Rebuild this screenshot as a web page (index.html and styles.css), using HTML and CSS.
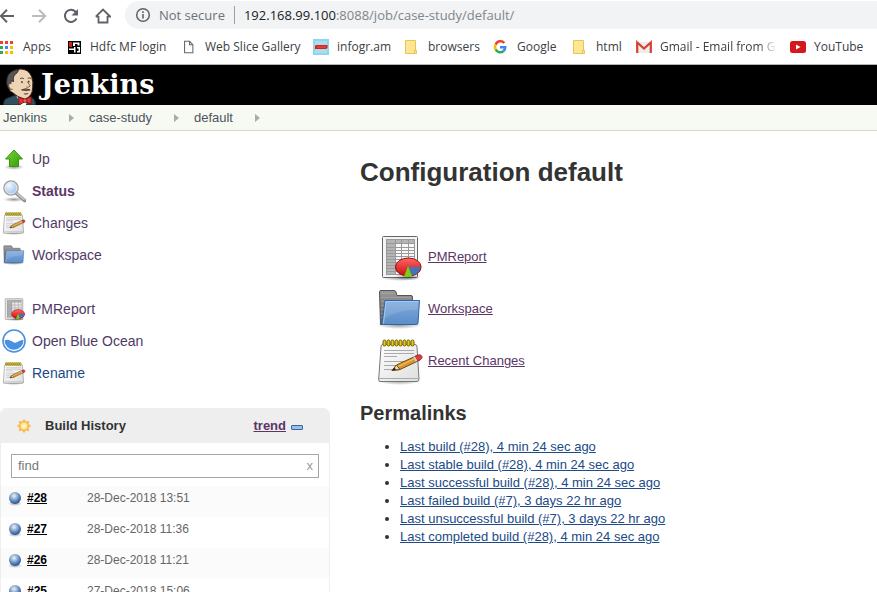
FILE: index.html
```html
<!DOCTYPE html>
<html lang="en">
<head>
<meta charset="utf-8">
<title>case-study default [Jenkins]</title>
<link rel="stylesheet" href="styles.css">
</head>
<body>
<svg class="defs" aria-hidden="true">
  <defs>
    <linearGradient id="g-green" x1="0" y1="0" x2="1" y2="1"><stop offset="0" stop-color="#7ad83a"/><stop offset="1" stop-color="#2f9a08"/></linearGradient>
    <linearGradient id="g-folder" x1="0" y1="0" x2="0" y2="1"><stop offset="0" stop-color="#82abdb"/><stop offset="1" stop-color="#5b8dc8"/></linearGradient>
    <linearGradient id="g-back" x1="0" y1="0" x2="0" y2="1"><stop offset="0" stop-color="#9a9a9a"/><stop offset="1" stop-color="#5c5c5c"/></linearGradient>
    <linearGradient id="g-paper" x1="0" y1="0" x2="1" y2="1"><stop offset="0" stop-color="#ffffff"/><stop offset="1" stop-color="#dedede"/></linearGradient>
    <linearGradient id="g-red" x1="0" y1="0" x2="0" y2="1"><stop offset="0" stop-color="#f66"/><stop offset="1" stop-color="#c90d0d"/></linearGradient>
    <radialGradient id="g-shadow"><stop offset="0" stop-color="#000" stop-opacity=".4"/><stop offset="1" stop-color="#000" stop-opacity="0"/></radialGradient>
    <radialGradient id="g-lens" cx=".35" cy=".3" r=".8"><stop offset="0" stop-color="#f4faff"/><stop offset="1" stop-color="#8fb9ea"/></radialGradient>
    <radialGradient id="g-ball" cx=".42" cy=".33" r=".65"><stop offset="0" stop-color="#edf4f8"/><stop offset=".35" stop-color="#a4bdd6"/><stop offset=".75" stop-color="#4f7ab3"/><stop offset="1" stop-color="#2c5a9c"/></radialGradient>
    <radialGradient id="g-sun"><stop offset="0" stop-color="#fffbd0"/><stop offset="1" stop-color="#fcdc62"/></radialGradient>
  </defs>
  <symbol id="i-up" viewBox="0 0 24 24">
    <ellipse cx="12" cy="20" rx="10" ry="3" fill="url(#g-shadow)"/>
    <path d="M12 3 20.500 12H16.500V19.500H7.500V12H3.500Z" fill="url(#g-green)" stroke="#3c9411"/>
  </symbol>
  <symbol id="i-search" viewBox="0 0 24 24">
    <ellipse cx="12" cy="20.500" rx="11" ry="2.500" fill="url(#g-shadow)"/>
    <path d="M14.500 14.500 22.500 21.500" stroke="#888" stroke-width="3.600" stroke-linecap="round"/>
    <path d="M15 14.500 22 20.500" stroke="#c4c4c4" stroke-width="2" stroke-linecap="round"/>
    <circle cx="9" cy="9" r="7" fill="url(#g-lens)" stroke="#a0a0a0" stroke-width="1.600"/>
    <circle cx="9" cy="9" r="6" fill="none" stroke="#e9eef2"/>
  </symbol>
  <symbol id="i-note" viewBox="0 0 48 48">
    <ellipse cx="23" cy="44" rx="22" ry="4" fill="url(#g-shadow)"/>
    <path d="M6.500 7.500H39Q41 7.500 41 10L43 42Q43 44.500 41 44.500H4Q2.500 44.500 2.700 42L5 10Q5 7.500 6.500 7.500Z" fill="url(#g-paper)" stroke="#777"/>
    <path d="M3 41.500H43" stroke="#aaa"/>
    <path d="M8 13.500H38M8 16.500H38M8 19.500H21M8 24.500H34M8 28.500H30M8 32.500H19" stroke="#aaa" fill="none"/>
    <g fill="#e8c916" stroke="#6b5c00"><rect x="7" y="3" width="3" height="6" rx="1.500"/><rect x="11" y="3" width="3" height="6" rx="1.500"/><rect x="15" y="3" width="3" height="6" rx="1.500"/><rect x="19" y="3" width="3" height="6" rx="1.500"/><rect x="23" y="3" width="3" height="6" rx="1.500"/><rect x="27" y="3" width="3" height="6" rx="1.500"/><rect x="31" y="3" width="3" height="6" rx="1.500"/><rect x="35" y="3" width="3" height="6" rx="1.500"/></g>
    <path d="M16 33.500 20.500 28 41 18.500 44 23 24 32.500Z" fill="#d9982e" stroke="#704a10"/>
    <path d="M16 33.500 20.500 28 24 32.500Z" fill="#f0d9a8" stroke="#704a10"/>
    <path d="M16 33.500 18.500 30.500 20 32.800Z" fill="#222"/>
    <path d="M22 29.500 41 20.500" stroke="#f4c873"/>
    <path d="M39 19.500 42 18Q45 17 46 19.500Q46.500 21.500 44.500 22.500L41.500 24Z" fill="#e03a3a" stroke="#9b3030"/>
    <path d="M38 19.800 40.500 24.300" stroke="#ccc" stroke-width="2"/>
  </symbol>
  <symbol id="i-folder" viewBox="0 0 48 48">
    <ellipse cx="23" cy="40" rx="23" ry="4" fill="url(#g-shadow)"/>
    <path d="M4.500 39.500 3.500 7Q3.500 5.500 5 5.500H18Q19.500 5.500 20 7L21 10.500H35Q36.500 10.500 36.500 12V39.500Z" fill="url(#g-back)" stroke="#555"/>
    <path d="M5 8.500H18M5 12.500H35M5 16.500H35M5 20.500H8M5 24.500H8M5 28.500H8M5 32.500H8" stroke="#aaa" stroke-opacity=".6"/>
    <path d="M9 15.500H43.500L42 38Q42 39.500 40 39.500H7Q5.500 39.500 6 38Z" fill="url(#g-folder)" stroke="#2f64a8"/>
    <path d="M10 16.500H42.500L41.500 25Q24 24 9 33Z" fill="#fff" fill-opacity=".12"/>
    <path d="M7.500 38.500 10 16.500H42.500" fill="none" stroke="#a9c8ec"/>
  </symbol>
  <symbol id="i-report" viewBox="0 0 48 48">
    <ellipse cx="25" cy="45" rx="20" ry="3" fill="url(#g-shadow)"/>
    <rect x="6.500" y="3.500" width="35" height="41" rx="1" fill="#f4f4f4" stroke="#666"/>
    <rect x="10" y="6" width="29" height="35" fill="#f8f8f8"/>
    <path d="M10 6H39V10.500H20V41H10Z" fill="#b5b5b5"/>
    <path d="M10 6.500H39M10 10.500H39M10 14.500H39M10 17.500H39M10 20.500H39M10 23.500H39M10 26.500H39M10 29.500H39M10 32.500H39M10 35.500H39M10 38.500H39M10 41.500H39M10.500 6V41M19.500 6V41M25.500 6V41M32.500 6V41M38.500 6V41" stroke="#999" fill="none"/>
    <ellipse cx="32" cy="43.500" rx="13" ry="4" fill="url(#g-shadow)"/>
    <path d="M19.500 33V36A13 9 0 0 0 45 36V33Z" fill="#a40000"/>
    <ellipse cx="32.300" cy="34" rx="12.800" ry="9" fill="url(#g-red)" stroke="#9c1010"/>
    <path d="M32 34H44.500A13 9 0 0 1 36 42.500Z" fill="#4673b5"/>
    <path d="M32 33 28 43.500Q32 44.500 36 43Z" fill="#73d216"/>
  </symbol>
  <symbol id="i-ocean" viewBox="0 0 24 24">
    <circle cx="12" cy="12" r="11" fill="#fff" stroke="#4a90e2" stroke-width="1.600"/>
    <path d="M2.500 11.500C6 9.500 9 12 12 13.500C15 14.500 17 11 21.500 11A9.500 9.500 0 0 1 2.500 11.500Z" fill="#4a90e2"/>
  </symbol>
  <symbol id="i-ball" viewBox="0 0 16 16">
    <ellipse cx="8" cy="13.500" rx="7" ry="2.500" fill="url(#g-shadow)"/>
    <circle cx="8" cy="8" r="6" fill="url(#g-ball)"/>
  </symbol>
  <symbol id="i-bfolder" viewBox="0 0 16 16">
    <path d="M1.500 1.500H11.500V11.500H12.500V14.500H1.500Z" fill="#ffe694" stroke="#e8c451"/>
    <path d="M10.500 14V11.500H12.500" fill="none" stroke="#e8c451"/>
  </symbol>
</svg>

<div class="window">
  <div class="toolbar">
    <div class="nav">
      <button type="button" aria-label="Back"><svg viewBox="0 0 16 16" class="ic16"><path d="M15 8H2M8 1.800 1.800 8 8 14.200" fill="none" stroke="#5f6368" stroke-width="2"/></svg></button>
      <button type="button" aria-label="Forward"><svg viewBox="0 0 16 16" class="ic16"><path d="M1 8H14M8 1.800 14.200 8 8 14.200" fill="none" stroke="#babcbe" stroke-width="2"/></svg></button>
      <button type="button" aria-label="Reload"><svg viewBox="0 0 16 16" class="ic16"><path d="M13.500 10.500A6.100 6.100 0 1 1 12.500 3.700L14 5.200" fill="none" stroke="#5f6368" stroke-width="2"/><path d="M15 1V7.500H8.500Z" fill="#5f6368"/></svg></button>
      <button type="button" aria-label="Home"><svg viewBox="0 0 16 16" class="ic16"><path d="M3.500 8V14.500H12.500V8M.8 8.600 8 1.500 15.200 8.600H12M.8 8.600H4" fill="none" stroke="#5f6368" stroke-width="1.800"/></svg></button>
    </div>
    <div class="address">
      <svg viewBox="0 0 16 16" class="ic16"><circle cx="8" cy="8" r="6.300" fill="none" stroke="#5f6368" stroke-width="1.500"/><path d="M8 7V11.500M8 4.300V6" stroke="#5f6368" stroke-width="1.600"/></svg>
      <span class="secure">Not secure</span>
      <span class="url"><b>192.168.99.100</b>:8088/job/case-study/default/</span>
    </div>
  </div>
  <nav class="bookmarks" aria-label="Bookmarks">
    <a href="#" class="apps"><svg viewBox="0 0 14 14" class="ic14"><path d="M0 1H3V4H0ZM5 1H8V4H5ZM10 1H13V4H10Z" fill="#ea4335"/><path d="M0 6H3V9H0Z" fill="#34a853"/><path d="M5 6H8V9H5Z" fill="#4285f4"/><path d="M10 6H13V9H10ZM5 11H8V14H5ZM10 11H13V14H10Z" fill="#fbbc05"/><path d="M0 11H3V14H0Z" fill="#34a853"/></svg><span>Apps</span></a>
    <a href="#" class="hdfc"><svg viewBox="0 0 14 14" class="ic14"><path d="M0 1H13V14H0Z" fill="#000"/><path d="M5 2.500H11.500V5.500H9.500V4H7V6H5Z" fill="#fff"/><path d="M1 2H4V7H1Z" fill="#d81f10"/><path d="M1 8.500H6V7H7.500V12.500H6V10H1ZM9 7H12V12.500H9V11H10.500V8.500H9Z" fill="#fff"/></svg><span>Hdfc MF login</span></a>
    <a href="#"><svg viewBox="0 0 14 16" class="ic14"><path d="M.8 1.500H6.500L10.300 5.300V14.500H.8ZM6.500 1.500V5.500H10" fill="none" stroke="#666" stroke-width="1.200"/></svg><span>Web Slice Gallery</span></a>
    <a href="#"><svg viewBox="0 0 16 16" class="ic16"><path d="M0 0H16V16H0Z" fill="#8fd6ea"/><path d="M2 2H14V14H2Z" fill="#a9dfee"/><path d="M2 7 3 6H14.500V9L13 10H2Z" fill="#d91e1e"/><path d="M4 8H13" stroke="#ef5b5b"/></svg><span>infogr.am</span></a>
    <a href="#"><svg class="ic16"><use href="#i-bfolder"/></svg><span>browsers</span></a>
    <a href="#"><svg viewBox="0 0 16 16" class="ic16"><g fill="none" stroke-width="2.600"><path d="M11.300 4A5 5 0 0 0 2.700 5.700" stroke="#ea4335"/><path d="M2.700 5.700A5 5 0 0 0 2.700 10.500" stroke="#fbbc05"/><path d="M2.700 10.500A5 5 0 0 0 10.500 12" stroke="#34a853"/><path d="M10.500 12Q12.200 10.500 12.200 8.300H7" stroke="#4285f4"/></g></svg><span>Google</span></a>
    <a href="#"><svg class="ic16"><use href="#i-bfolder"/></svg><span>html</span></a>
    <a href="#" class="gmail"><svg viewBox="0 0 16 16" class="ic16"><path d="M1 3H15V14H1Z" fill="#eee"/><path d="M1.200 14V3.500L8 9.500 14.800 3.500V14" fill="none" stroke="#d8402f" stroke-width="2.200"/></svg><span>Gmail - Email from Go</span></a>
    <a href="#"><svg viewBox="0 0 16 16" class="ic16"><rect y="2" width="16" height="12" rx="2.500" fill="#d3191d"/><path d="M6 5.500 10.500 8 6 10.500Z" fill="#fff"/></svg><span>YouTube</span></a>
  </nav>

  <header class="header">
    <svg viewBox="0 0 36 38" class="butler" aria-hidden="true">
      <path d="M1 38Q1 32 5 31L13 28H25L31 31Q34 33 34 38Z" fill="#31505f" stroke="#182a33"/>
      <path d="M14 28 19 38H24L27 29Z" fill="#fff"/>
      <path d="M8 24Q4 18 6 10Q9 2 18 1Q27 1 30 9Q32 15 31 20Q31 29 23 32Q15 30 10 25Z" fill="#efd3b5" stroke="#33261e"/>
      <path d="M17 1.500Q8 2 5 9Q3 16 6 21L8.500 21Q8 17 9 13L11.500 14Q10 8 15 5Z" fill="#555" stroke="#222" stroke-width=".8"/>
      <path d="M9 16Q6 15 6.500 19Q7.500 23 10.500 22" fill="#efd3b5" stroke="#6e5340"/>
      <path d="M18 11Q20 9.500 22 11M26 10.500Q28 9.500 29.500 11" fill="none" stroke="#46352a" stroke-width=".9"/>
      <path d="M20 13.500V15.500M27 13V15" stroke="#222" stroke-width="1.300"/>
      <path d="M25.500 14 28.500 18.500Q27 20.500 24.500 19.500" fill="none" stroke="#6e5340" stroke-width=".9"/>
      <path d="M19.500 22.500Q24 20 28.500 22.500Q24 24 19.500 22.500ZM22 26.500Q24.500 27.500 26.500 26" fill="#80664f" stroke="#46352a" stroke-width=".8"/>
      <path d="M16.500 30 23 32.500 29.500 29.500V37L23 34.500 17 38Z" fill="#e03232" stroke="#7d1414"/>
      <circle cx="23" cy="33.500" r="2" fill="#ef5a50" stroke="#7d1414" stroke-width=".7"/>
    </svg>
    <a href="#" class="brand">Jenkins</a>
  </header>
  <nav class="crumbs" aria-label="Breadcrumb">
    <a href="#">Jenkins</a><i></i><a href="#">case-study</a><i></i><a href="#">default</a><i></i>
  </nav>

  <div class="page-body">
    <aside class="side">
      <nav class="tasks">
        <a href="#"><svg class="ic24"><use href="#i-up"/></svg>Up</a>
        <a href="#" class="current"><svg class="ic24"><use href="#i-search"/></svg>Status</a>
        <a href="#"><svg class="ic24"><use href="#i-note"/></svg>Changes</a>
        <a href="#"><svg class="ic24"><use href="#i-folder"/></svg>Workspace</a>
      </nav>
      <nav class="tasks">
        <a href="#"><svg class="ic24"><use href="#i-report"/></svg>PMReport</a>
        <a href="#"><svg class="ic24"><use href="#i-ocean"/></svg>Open Blue Ocean</a>
        <a href="#" class="fresh"><svg class="ic24"><use href="#i-note"/></svg>Rename</a>
      </nav>
      <section class="history">
        <div class="history-head">
          <svg viewBox="0 0 16 16" class="ic16"><path d="M8 .5 9.700 3.500 13.300 2.700 12.500 6.300 15.500 8 12.500 9.700 13.300 13.300 9.700 12.500 8 15.500 6.300 12.500 2.700 13.300 3.500 9.700.5 8 3.500 6.300 2.700 2.700 6.300 3.500Z" fill="#f7bd62"/><circle cx="8" cy="8" r="4.300" fill="url(#g-sun)" stroke="#f4a845" stroke-width=".8"/></svg>
          <h3>Build History</h3>
          <a href="#" class="trend">trend</a>
          <button type="button" class="collapse" aria-label="Collapse"></button>
        </div>
        <div class="find">
          <input type="text" placeholder="find" aria-label="find">
          <button type="button" aria-label="Clear">x</button>
        </div>
        <table class="builds">
          <tr><td class="num"><div><svg class="ic16"><use href="#i-ball"/></svg><a href="#">#28</a></div></td><td>28-Dec-2018 13:51</td></tr>
          <tr><td class="num"><div><svg class="ic16"><use href="#i-ball"/></svg><a href="#">#27</a></div></td><td>28-Dec-2018 11:36</td></tr>
          <tr><td class="num"><div><svg class="ic16"><use href="#i-ball"/></svg><a href="#">#26</a></div></td><td>28-Dec-2018 11:21</td></tr>
          <tr><td class="num"><div><svg class="ic16"><use href="#i-ball"/></svg><a href="#">#25</a></div></td><td>27-Dec-2018 15:06</td></tr>
        </table>
      </section>
    </aside>
    <main class="main">
      <h1>Configuration default</h1>
      <div class="shortcuts">
        <div><svg class="ic48"><use href="#i-report"/></svg><a href="#">PMReport</a></div>
        <div><svg class="ic48"><use href="#i-folder"/></svg><a href="#">Workspace</a></div>
        <div><svg class="ic48"><use href="#i-note"/></svg><a href="#">Recent Changes</a></div>
      </div>
      <h2>Permalinks</h2>
      <ul>
        <li><a href="#">Last build (#28), 4 min 24 sec ago</a></li>
        <li><a href="#">Last stable build (#28), 4 min 24 sec ago</a></li>
        <li><a href="#">Last successful build (#28), 4 min 24 sec ago</a></li>
        <li><a href="#">Last failed build (#7), 3 days 22 hr ago</a></li>
        <li><a href="#">Last unsuccessful build (#7), 3 days 22 hr ago</a></li>
        <li><a href="#">Last completed build (#28), 4 min 24 sec ago</a></li>
      </ul>
    </main>
  </div>
</div>
</body>
</html>
```
FILE: styles.css
```css
* { box-sizing: border-box; }
body { margin: 0; background: #fff; color: #333; font: 13px/18px "Liberation Sans", Arial, sans-serif; }
button { border: 0; padding: 0; background: none; font: inherit; }
svg { flex: none; display: block; }
.defs { position: absolute; width: 0; height: 0; }
.ic14 { width: 14px; height: 14px; }
.ic16 { width: 16px; height: 16px; }
.ic24 { width: 24px; height: 24px; }
.ic48 { width: 48px; height: 48px; }

.window { display: flex; flex-direction: column; height: 100vh; overflow: hidden; }
.window > * { flex: none; }

.toolbar { display: flex; align-items: center; height: 30px; font: 13px/18px "Open Sans", "Noto Sans", sans-serif; }
.nav { display: flex; gap: 16px; width: 125px; margin-top: 1px; }
.nav button:first-child { margin-left: -1px; }
.address { flex: 1; display: flex; align-items: center; height: 28px; padding-left: 10px; border-radius: 14px 0 0 14px; background: #f1f3f4; color: #80868b; }
.secure { margin-left: 8px; padding-right: 9px; border-right: 1px solid #9aa0a6; color: #6d7276; }
.url { margin-left: 9px; }
.url b { font-weight: normal; color: #202124; }

.bookmarks { display: grid; grid-template-columns: 68px 115px 130px 91px 89px 79px 64px 154px 1fr; align-items: center; height: 35px; border-bottom: 1px solid #b6b4b6; font: 12px/18px "Open Sans", "Noto Sans", sans-serif; }
.bookmarks a { display: flex; align-items: center; gap: 8px; overflow: hidden; white-space: nowrap; color: #3c4043; text-decoration: none; }
.bookmarks .apps { gap: 9px; }
.gmail span { -webkit-mask-image: linear-gradient(to right, #000 80%, transparent 95%); mask-image: linear-gradient(to right, #000 80%, transparent 95%); }

.header { display: flex; align-items: center; height: 40px; background: #000; }
.butler { align-self: flex-end; width: 36px; height: 37px; margin-left: 2px; }
.brand { margin-left: 3px; color: #fff; font: bold 27px/38px "DejaVu Serif", serif; text-decoration: none; }

.crumbs { display: flex; align-items: center; height: 26px; padding-left: 3px; border-bottom: 1px solid #d3d7cf; background: #f6faf2; }
.crumbs a { color: #4d545d; text-decoration: none; }
.crumbs i { margin: 0 15px 0 22px; border: solid transparent; border-width: 4px 0 4px 5px; border-left-color: #aaa; }

.page-body { display: flex; }
.side { width: 330px; padding-top: 12px; }
.tasks { margin-bottom: 22px; }
.tasks a { display: flex; align-items: center; gap: 6px; height: 32px; padding-left: 2px; color: #4f3a66; font-size: 14px; text-decoration: none; }
.tasks .current { color: #5c3566; font-weight: bold; }
.tasks .fresh { color: #204a87; }

.history { margin-top: -3px; border: 1px solid #eee; border-radius: 6px 6px 0 0; overflow: hidden; }
.history-head { display: flex; align-items: center; height: 34px; padding: 0 26px 0 15px; background: #eee; }
.history-head h3 { flex: 1; margin: 0 0 0 13px; font-size: 13px; }
.trend { color: #5c3566; font-weight: bold; }
.collapse { width: 12px; height: 5px; margin: 2px 0 0 5px; border: 1px solid #3465a4; border-radius: 1px; background: #9abfe6; }
.find { display: flex; align-items: center; height: 24px; margin: 11px 10px 8px; padding: 0 5px 0 6px; border: 1px solid #a6a6a6; }
.find input { flex: 1; min-width: 0; border: 0; padding: 0; outline: 0; font: inherit; }
.find input::placeholder { color: #777; opacity: 1; }
.find button { color: #999; }
.builds { width: 100%; border-collapse: collapse; color: #666; font-size: 12px; }
.builds tr { height: 31px; }
.builds tr:nth-child(odd) { background: #fbfbfb; }
.builds td { padding: 0 0 7px; }
.builds .num { width: 86px; padding-left: 6px; }
.num div { display: flex; align-items: center; gap: 4px; }
.num a { color: #000; font-weight: bold; }

.main { flex: 1; padding: 23px 0 0 30px; }
.main h1 { margin: 0 0 41px; font-size: 26px; line-height: 36px; }
.shortcuts { padding-left: 16px; }
.shortcuts div { display: flex; align-items: center; gap: 4px; height: 52px; }
.shortcuts a { color: #5c3566; }
.main h2 { margin: 13px 0 12px; font-size: 20px; line-height: 26px; }
.main ul { margin: 0; padding-left: 40px; }
.main li a { color: #204a87; }
```
